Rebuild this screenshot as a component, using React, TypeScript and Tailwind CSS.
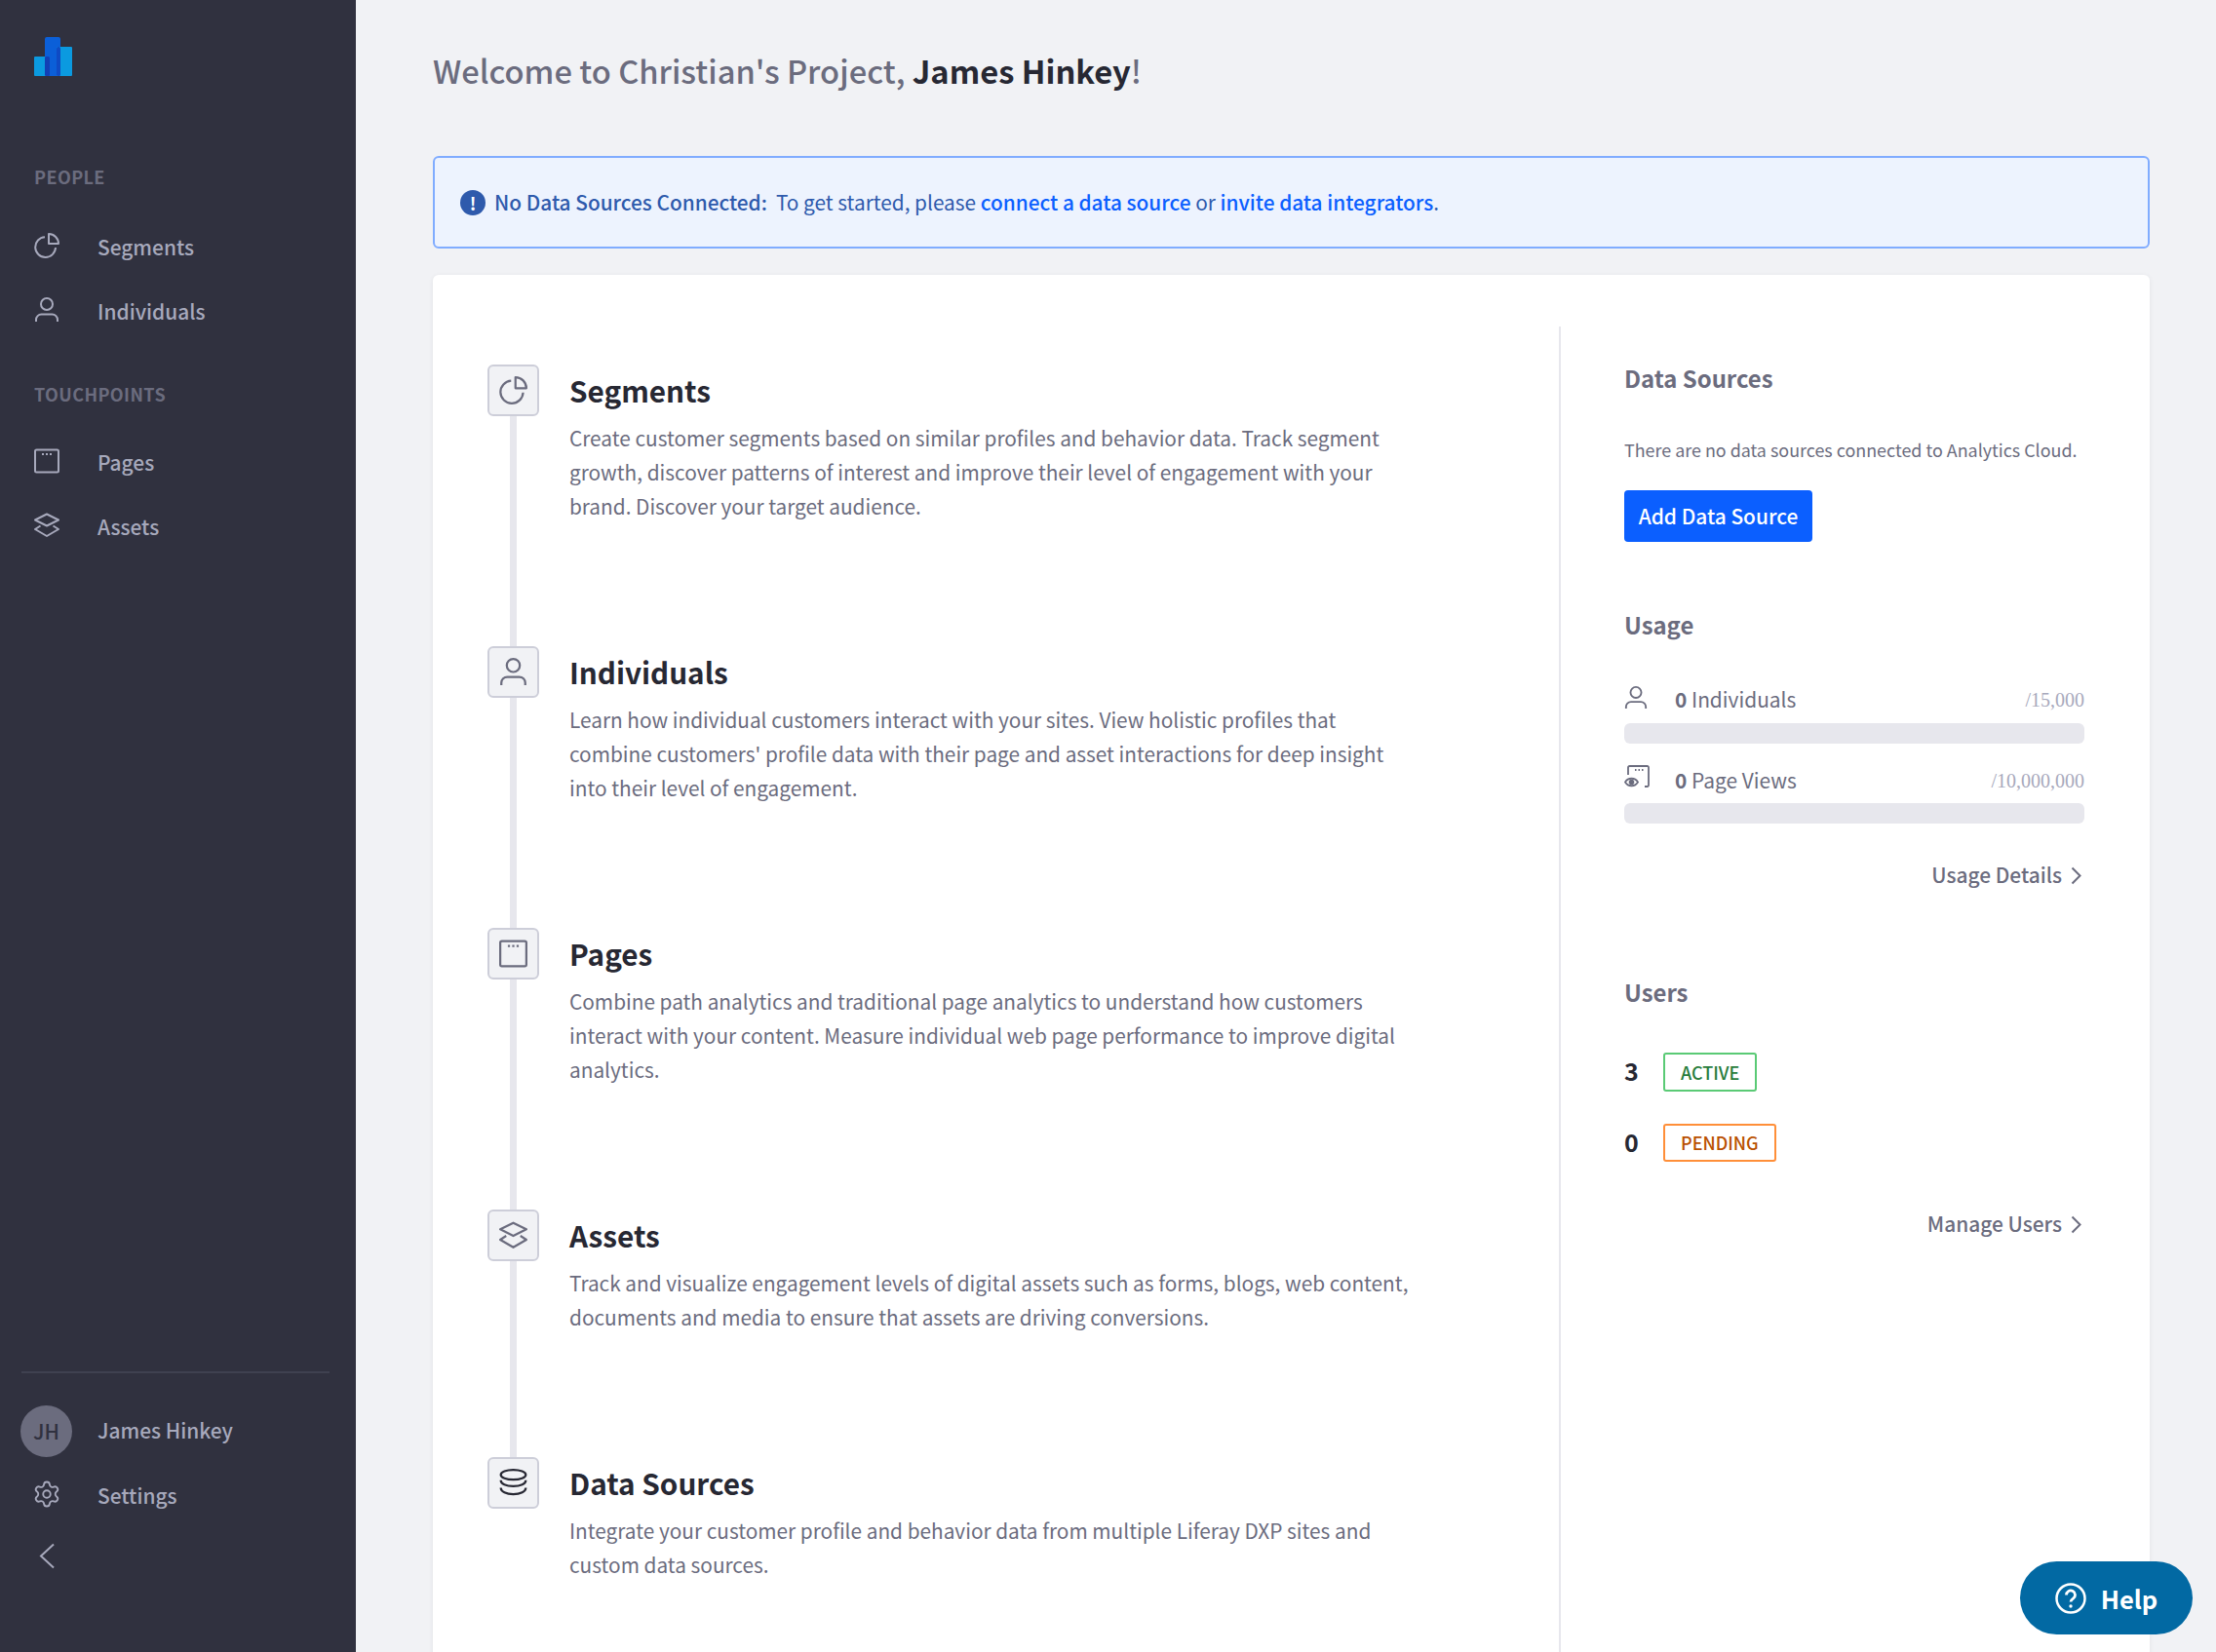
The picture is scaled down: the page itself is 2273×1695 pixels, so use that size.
import { Settings } from "lucide-react";
import type { ReactNode } from "react";

const icon = "fill-none stroke-current stroke-2";

function PieIcon({ className = "" }: { className?: string }) {
  return (
    <svg viewBox="0 0 26 26" className={`${icon} ${className}`}>
      <path d="M11 4.200A10.400 10.400 0 1 0 22 15" />
      <path d="M15 1A10 10 0 0 1 25 11H15Z" strokeLinejoin="round" />
    </svg>
  );
}
function UserIcon({ className = "" }: { className?: string }) {
  return (
    <svg viewBox="0 0 26 26" className={`${icon} ${className}`}>
      <circle cx="13" cy="7" r="6" />
      <path d="M2 25v-2a5.500 5.500 0 0 1 5.500-5.500h11a5.500 5.500 0 0 1 5.500 5.500v2" />
    </svg>
  );
}
function PageIcon({ className = "" }: { className?: string }) {
  return (
    <svg viewBox="0 0 26 26" className={`${icon} ${className}`}>
      <rect x="1" y="1.500" width="24" height="23" rx="1.500" />
      <path d="M8 6h2M12 6h2M16 6h2" />
    </svg>
  );
}
function LayersIcon({ className = "" }: { className?: string }) {
  return (
    <svg viewBox="0 0 26 26" className={`${icon} ${className}`}>
      <path d="M13 1.500L25 7.500L13 13.500L1 7.500Z" strokeLinejoin="round" />
      <path d="M6.500 13.500L1 17L13 24L25 17L19.500 13.500" strokeLinejoin="round" />
    </svg>
  );
}
function DbIcon({ className = "" }: { className?: string }) {
  return (
    <svg viewBox="0 0 26 26" className={`${icon} ${className}`}>
      <ellipse cx="13" cy="5.500" rx="11.500" ry="4.500" />
      <path d="M1.500 10.500c0 3.500 5 5.500 11.500 5.500s11.500-2 11.500-5.500" />
      <path d="M1.500 17.500c0 3.500 5 6 11.500 6s11.500-2.500 11.500-6" />
    </svg>
  );
}
function PageViewIcon({ className = "" }: { className?: string }) {
  return (
    <svg viewBox="0 0 26 26" className={`${icon} ${className}`}>
      <path d="M4 10V2.500A1.500 1.500 0 0 1 5.500 1h18A1.500 1.500 0 0 1 25 2.500v18a1.500 1.500 0 0 1-1.500 1.500H21" strokeWidth="1.800" />
      <path d="M11 5h1.500M14.500 5h1.500M18 5h1.500" />
      <path d="M1 17.500c3-5 10-5 13 0c-3 5-10 5-13 0Z" strokeWidth="1.800" />
      <circle cx="7.500" cy="17.500" r="1.800" className="fill-current" />
    </svg>
  );
}

function NavItem({ icon: ic, label, className }: { icon: ReactNode; label: string; className: string }) {
  return (
    <div className={`flex items-center h-[36px] pl-[35px] ${className}`}>
      <div className="w-[26px] h-[26px] shrink-0 -translate-y-[2px]">{ic}</div>
      <span className="ml-[39px] text-[20.900px] leading-[36px] font-medium -translate-y-[1px]">{label}</span>
    </div>
  );
}

function Step({
  icon: ic,
  title,
  children,
  last,
  iconColor = "text-[#6b6c7e]",
}: {
  icon: ReactNode;
  title: string;
  children: ReactNode;
  last?: boolean;
  iconColor?: string;
}) {
  return (
    <div className="flex">
      <div className="flex flex-col items-center w-[53px] shrink-0">
        <div className={`w-[53px] h-[53px] shrink-0 rounded-[6px] border-2 border-[#cdced9] bg-[#f1f2f5] flex items-center justify-center ${iconColor}`}>
          <div className="w-[29px] h-[29px]">{ic}</div>
        </div>
        {!last && <div className="w-[7px] flex-1 bg-[#e7e7ed]" />}
      </div>
      <div className={`ml-[31px] w-[866px] ${last ? "" : "pb-[126.600px]"}`}>
        <h3 className="text-[29.700px] leading-[53px] font-bold text-[#272833]">{title}</h3>
        <p className="mt-[5px] text-[20.800px] leading-[34.800px] text-[#6b6c7e]">{children}</p>
      </div>
    </div>
  );
}

function Heading({ className = "", children }: { className?: string; children: ReactNode }) {
  return <h4 className={`text-[23.900px] leading-[36px] font-bold text-[#6b6c7e] ${className}`}>{children}</h4>;
}

function Bar({ className = "" }: { className?: string }) {
  return <div className={`h-[21px] rounded-[6px] bg-[#e7e7ed] ${className}`} />;
}

function MoreLink({ label, className = "" }: { label: string; className?: string }) {
  return (
    <div className={`flex items-center justify-end h-[36px] text-[20.900px] font-medium text-[#6b6c7e] ${className}`}>
      <span>{label}</span>
      <svg viewBox="0 0 11 19" className="w-[11px] h-[19px] ml-[9px] mr-[3px] fill-none stroke-current stroke-2">
        <path d="M1.500 1.500L9.500 9.500L1.500 17.500" />
      </svg>
    </div>
  );
}

export default function App() {
  return (
    <div className="flex h-[1695px] overflow-hidden bg-[#f1f2f5] font-['Noto_Sans_CJK_SC',sans-serif]">
      <aside className="w-[365px] shrink-0 bg-[#30313f] flex flex-col text-[#a7a9bc]">
        <div className="pl-[35px] pt-[38px]">
          <svg viewBox="0 0 39 40" className="w-[39px] h-[40px]">
            <rect x="0" y="20" width="14" height="20" rx="1" fill="#0b9ae0" />
            <rect x="11" y="0" width="16" height="40" rx="2" fill="#0b5fd8" />
            <rect x="23" y="10" width="16" height="30" rx="1" fill="#0b9ae0" />
            <rect x="11" y="20" width="5" height="20" rx="1.500" fill="#123fb5" />
            <rect x="23" y="10" width="4" height="30" rx="1.500" fill="#0f4ac4" />
          </svg>
        </div>
        <div className="mt-[91px] pl-[35px] text-[18px] leading-[24px] font-bold tracking-[0.4px] text-[#6b6c7e]">PEOPLE</div>
        <NavItem className="mt-[43px]" icon={<PieIcon className="w-full h-full" />} label="Segments" />
        <NavItem className="mt-[30px]" icon={<UserIcon className="w-full h-full" />} label="Individuals" />
        <div className="mt-[54px] pl-[35px] text-[18px] leading-[24px] font-bold tracking-[0.4px] text-[#6b6c7e]">TOUCHPOINTS</div>
        <NavItem className="mt-[41px]" icon={<PageIcon className="w-full h-full" />} label="Pages" />
        <NavItem className="mt-[30px]" icon={<LayersIcon className="w-full h-full" />} label="Assets" />
        <div className="mt-auto ml-[22px] mr-[27px] h-[2px] bg-[#3f4150]" />
        <div className="flex items-center mt-[33px] pl-[21px]">
          <div className="w-[53px] h-[53px] rounded-full bg-[#6b6c7e] flex items-center justify-center text-[20.900px] text-[#30313f] font-medium">JH</div>
          <span className="ml-[26px] text-[20.900px] leading-[36px] font-medium -translate-y-[2px]">James Hinkey</span>
        </div>
        <div className="flex items-center mt-[22px] pl-[33px]">
          <Settings className="w-[30px] h-[30px] -translate-y-[2px]" strokeWidth={1.500} />
          <span className="ml-[37px] text-[20.900px] leading-[36px] font-medium -translate-y-[1px]">Settings</span>
        </div>
        <div className="pl-[40px] mt-[30px] mb-[85px]">
          <svg viewBox="0 0 16 27" className="w-[16px] h-[27px] fill-none stroke-current stroke-2">
            <path d="M15 1.500L2 13.500L15 25.500" />
          </svg>
        </div>
      </aside>

      <main className="flex-1 min-w-0 pl-[79px] pr-[68px]">
        <h1 className="mt-[48px] text-[32.700px] leading-[48px] font-medium text-[#6b6c7e]">
          Welcome to Christian's Project, <span className="font-bold text-[#272833]">James Hinkey</span>!
        </h1>
        <div className="mt-[64px] h-[95px] rounded-[6px] border-2 border-[#80acff] bg-[#edf3fe] flex items-center pl-[26px] text-[20.800px] text-[#2e5aac]">
          <span className="w-[26px] h-[26px] rounded-full bg-[#2e5aac] text-white flex items-center justify-center text-[18px] leading-[26px] font-bold shrink-0">!</span>
          <span className="ml-[9px] font-medium">No Data Sources Connected:</span>
          <span className="ml-[9px]">To get started, please&nbsp;</span>
          <span className="text-[#0b5fff] font-medium">connect a data source</span>
          <span>&nbsp;or&nbsp;</span>
          <span className="text-[#0b5fff] font-medium">invite data integrators</span>
          <span>.</span>
        </div>

        <div className="mt-[27px] h-[1500px] rounded-[6px] bg-white shadow-[0_1px_5px_rgba(39,40,51,0.08)] flex pt-[53px]">
          <section className="w-[1155px] shrink-0 pl-[56px] pt-[39px]">
            <Step icon={<PieIcon className="w-full h-full" />} title="Segments">
              Create customer segments based on similar profiles and behavior data. Track segment growth, discover patterns of interest and improve their level of engagement with your brand. Discover your target audience.
            </Step>
            <Step icon={<UserIcon className="w-full h-full" />} title="Individuals">
              Learn how individual customers interact with your sites. View holistic profiles that combine customers' profile data with their page and asset interactions for deep insight into their level of engagement.
            </Step>
            <Step icon={<PageIcon className="w-full h-full" />} title="Pages">
              Combine path analytics and traditional page analytics to understand how customers interact with your content. Measure individual web page performance to improve digital analytics.
            </Step>
            <Step icon={<LayersIcon className="w-full h-full" />} title="Assets">
              Track and visualize engagement levels of digital assets such as forms, blogs, web content, documents and media to ensure that assets are driving conversions.
            </Step>
            <Step last icon={<DbIcon className="w-full h-full" />} iconColor="text-[#272833]" title="Data Sources">
              Integrate your customer profile and behavior data from multiple Liferay DXP sites and custom data sources.
            </Step>
          </section>

          <section className="flex-1 min-w-0 border-l-2 border-[#e7e7ed] pl-[65px] pr-[67px] pt-[35px]">
            <Heading>Data Sources</Heading>
            <p className="mt-[40px] text-[17.900px] leading-[30px] text-[#6b6c7e] whitespace-nowrap">There are no data sources connected to Analytics Cloud.</p>
            <div className="mt-[27px] w-[193px] h-[53px] rounded-[4px] bg-[#0b5fff] text-white flex items-center justify-center text-[20.900px] font-medium">Add Data Source</div>

            <Heading className="mt-[67px]">Usage</Heading>
            <div className="mt-[41px] h-[36px] flex items-center">
              <UserIcon className="w-[24px] h-[26px] text-[#6b6c7e] -translate-y-[2px]" />
              <span className="ml-[28px] text-[20.900px] text-[#6b6c7e]"><span className="font-bold">0</span> Individuals</span>
              <span className="ml-auto text-[20px] text-[#a7a9bc] font-['Liberation_Serif',serif]">/15,000</span>
            </div>
            <Bar className="mt-[6px]" />
            <div className="mt-[20px] h-[36px] flex items-center">
              <PageViewIcon className="w-[26px] h-[26px] text-[#6b6c7e] -translate-y-[3px]" />
              <span className="ml-[26px] text-[20.900px] text-[#6b6c7e]"><span className="font-bold">0</span> Page Views</span>
              <span className="ml-auto text-[20px] text-[#a7a9bc] font-['Liberation_Serif',serif]">/10,000,000</span>
            </div>
            <Bar className="mt-[5px]" />
            <MoreLink label="Usage Details" className="mt-[35px]" />

            <Heading className="mt-[84px]">Users</Heading>
            <div className="mt-[44px] flex items-center">
              <span className="w-[40px] text-[25px] leading-[36px] font-bold text-[#272833] -translate-y-[2px]">3</span>
              <span className="h-[40px] px-[16px] rounded-[3px] border-2 border-[#5aca75] text-[#287d3c] text-[18px] font-medium flex items-center">ACTIVE</span>
            </div>
            <div className="mt-[33px] flex items-center">
              <span className="w-[40px] text-[25px] leading-[36px] font-bold text-[#272833] -translate-y-[2px]">0</span>
              <span className="h-[39px] px-[16px] rounded-[3px] border-2 border-[#ff8f39] text-[#b95000] text-[18px] font-medium flex items-center">PENDING</span>
            </div>
            <MoreLink label="Manage Users" className="mt-[46px]" />
          </section>
        </div>
      </main>

      <div className="absolute left-[2072px] top-[1602px] w-[177px] h-[75px] rounded-full bg-[#0269a3] text-white flex items-center justify-center">
        <svg viewBox="0 0 32 32" className="w-[32px] h-[32px] fill-none stroke-current">
          <circle cx="16" cy="16" r="14.500" strokeWidth="2.500" />
          <path d="M11.500 12.500a4.500 4.500 0 1 1 7 3.700c-1.500 1-2.500 1.800-2.500 3.300" strokeWidth="2.800" />
          <circle cx="16" cy="24" r="1.700" className="fill-current stroke-none" />
        </svg>
        <span className="ml-[15px] text-[25.500px] leading-[36px] font-bold">Help</span>
      </div>
    </div>
  );
}
